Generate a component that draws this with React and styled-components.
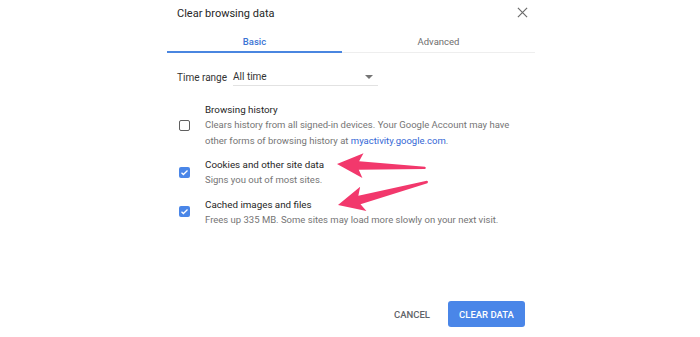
import React from "react";
import styled, { createGlobalStyle } from "styled-components";

const GlobalStyle = createGlobalStyle`
  body {
    margin: 0;
    background: #fff;
    font-family: Roboto, "Liberation Sans", Arial, sans-serif;
  }
`;

function Checkbox({ checked }) {
  return (
    <Box $checked={checked}>
      {checked && (
        <svg width="9" height="9" viewBox="0 0 24 24">
          <path
            d="M4 12.5l5 5L20 6.5"
            fill="none"
            stroke="#fff"
            strokeWidth="3.4"
          />
        </svg>
      )}
    </Box>
  );
}

function Arrows() {
  // arrow pointing left, tip at origin, tail along +x
  const shape = (len) =>
    `M0 0 L26 -12 L22 -3.8 L${len} -1.2 Q${len + 2} 0 ${len} 1.2 L22 4.8 L26 13 Z`;
  return (
    <Overlay width="700" height="337" viewBox="0 0 700 337">
      <path
        d={shape(88)}
        fill="#f2386c"
        transform="translate(337 164) rotate(2.5)"
      />
      <path
        d={shape(92)}
        fill="#f2386c"
        transform="translate(338 205) rotate(-14.5)"
      />
    </Overlay>
  );
}

export default function App() {
  const options = [
    {
      title: "Browsing history",
      checked: false,
      desc: (
        <>
          Clears history from all signed-in devices. Your Google Account may
          have other forms of browsing history at{" "}
          <Link>myactivity.google.com</Link>.
        </>
      ),
    },
    {
      title: "Cookies and other site data",
      checked: true,
      desc: "Signs you out of most sites.",
    },
    {
      title: "Cached images and files",
      checked: true,
      desc: "Frees up 335 MB. Some sites may load more slowly on your next visit.",
    },
  ];

  return (
    <Page>
      <GlobalStyle />
      <Dialog>
        <Header>
          <Title>Clear browsing data</Title>
          <Close>
            <svg width="11" height="11" viewBox="0 0 12 12">
              <path d="M1 1L11 11M11 1L1 11" stroke="#6b6b6b" strokeWidth="1.3" />
            </svg>
          </Close>
        </Header>
        <Tabs>
          <Tab $active>Basic</Tab>
          <Tab>Advanced</Tab>
        </Tabs>
        <Body>
          <RangeRow>
            <RangeLabel>Time range</RangeLabel>
            <Select>
              <span>All time</span>
              <Caret />
            </Select>
          </RangeRow>
          <Options>
            {options.map((o) => (
              <Option key={o.title}>
                <Checkbox checked={o.checked} />
                <OptionText>
                  <OptionTitle>{o.title}</OptionTitle>
                  <OptionDesc>{o.desc}</OptionDesc>
                </OptionText>
              </Option>
            ))}
          </Options>
        </Body>
        <Footer>
          <TextButton>CANCEL</TextButton>
          <PrimaryButton>CLEAR DATA</PrimaryButton>
        </Footer>
      </Dialog>
      <Arrows />
    </Page>
  );
}

const Page = styled.div`
  position: relative;
  width: 700px;
  height: 337px;
  overflow: hidden;
`;

const Overlay = styled.svg`
  position: absolute;
  left: 0;
  top: 0;
  pointer-events: none;
`;

const Dialog = styled.div`
  width: 368px;
  height: 337px;
  margin-left: 167px;
  display: flex;
  flex-direction: column;
`;

const Header = styled.div`
  height: 26px;
  display: flex;
  align-items: center;
  justify-content: space-between;
  padding: 0 7px 0 10px;
`;

const Title = styled.div`
  font-size: 11px;
  color: #262626;
`;

const Close = styled.div`
  display: flex;
  margin-top: -2px;
`;

const Tabs = styled.div`
  display: flex;
  border-bottom: 1px solid #eeeeee;
`;

const Tab = styled.div`
  flex: ${(p) => (p.$active ? "0 0 175px" : "1")};
  height: 27px;
  box-sizing: border-box;
  padding-top: 5px;
  display: flex;
  align-items: center;
  justify-content: center;
  font-size: 9.5px;
  font-weight: ${(p) => (p.$active ? 500 : 400)};
  color: ${(p) => (p.$active ? "#3b73d4" : "#6e6e6e")};
  border-bottom: 2px solid ${(p) => (p.$active ? "#4a86e0" : "transparent")};
  margin-bottom: -1px;
`;

const Body = styled.div`
  padding: 0 10px;
  flex: 1;
`;

const RangeRow = styled.div`
  display: flex;
  align-items: center;
  margin-top: 15px;
  height: 18px;
`;

const RangeLabel = styled.div`
  font-size: 10px;
  color: #333;
  margin-right: 6px;
`;

const Select = styled.div`
  width: 145px;
  height: 18px;
  display: flex;
  align-items: center;
  justify-content: space-between;
  font-size: 10px;
  color: #333;
  border-bottom: 1px solid #e2e2e2;
  padding-right: 5px;
  box-sizing: border-box;
`;

const Caret = styled.span`
  width: 0;
  height: 0;
  border-left: 4px solid transparent;
  border-right: 4px solid transparent;
  border-top: 4px solid #757575;
`;

const Options = styled.div`
  display: flex;
  flex-direction: column;
  gap: 9px;
  margin-top: 16px;
`;

const Option = styled.div`
  display: flex;
  align-items: center;
`;

const Box = styled.div`
  width: 11px;
  height: 11px;
  box-sizing: border-box;
  margin-left: 2px;
  margin-right: 15px;
  border-radius: 2px;
  flex-shrink: 0;
  display: flex;
  align-items: center;
  justify-content: center;
  border: ${(p) => (p.$checked ? "none" : "1.5px solid #5f5f5f")};
  background: ${(p) => (p.$checked ? "#4a86e8" : "transparent")};
`;

const OptionText = styled.div`
  display: flex;
  flex-direction: column;
`;

const OptionTitle = styled.div`
  font-size: 9.8px;
  line-height: 15px;
  color: #262626;
`;

const OptionDesc = styled.div`
  font-size: 9.5px;
  line-height: 15.5px;
  color: #757575;
`;

const Link = styled.span`
  color: #3367d6;
`;

const Footer = styled.div`
  display: flex;
  justify-content: flex-end;
  align-items: center;
  gap: 18px;
  padding: 0 10px 10px 0;
`;

const TextButton = styled.div`
  font-size: 9.5px;
  font-weight: 500;
  color: #5f6368;
`;

const PrimaryButton = styled.div`
  width: 77px;
  height: 26px;
  display: flex;
  align-items: center;
  justify-content: center;
  background: #4a86e8;
  border-radius: 3px;
  color: #fff;
  font-size: 9.5px;
  font-weight: 500;
`;
